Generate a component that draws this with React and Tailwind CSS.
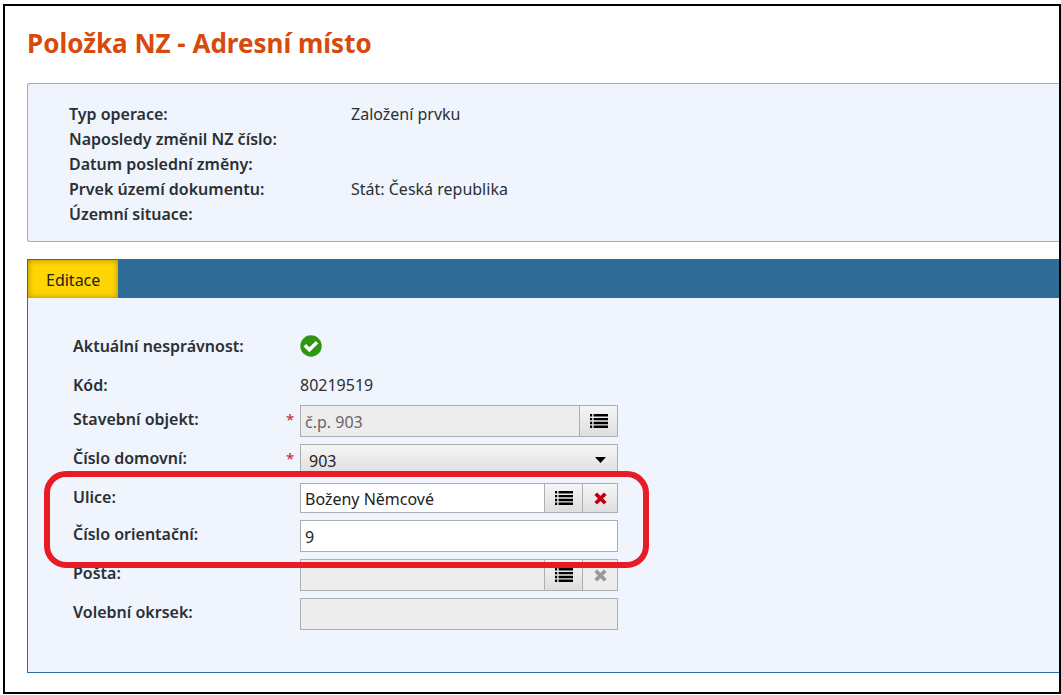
import React from "react";

const fieldBorder = "border border-[#aeaeb2]";
const buttonFace = "bg-linear-to-b from-[#f6f6f6] to-[#dedede]";

const summary = [
  ["Typ operace:", "Založení prvku"],
  ["Naposledy změnil NZ číslo:", ""],
  ["Datum poslední změny:", ""],
  ["Prvek území dokumentu:", "Stát: Česká republika"],
  ["Územní situace:", ""],
];

function ListIcon() {
  return (
    <svg width="18" height="14" viewBox="0 0 18 14" fill="#000" aria-hidden="true">
      <path d="M0 0h2.2v2.4H0zM0 3.9h2.2v2.4H0zM0 7.8h2.2v2.4H0zM0 11.6h2.2V14H0zM3.6 0H18v2.4H3.6zM3.6 3.9H18v2.4H3.6zM3.6 7.8H18v2.4H3.6zM3.6 11.6H18V14H3.6z" />
    </svg>
  );
}

function CrossIcon() {
  return (
    <svg width="13" height="13" viewBox="0 0 12 12" aria-hidden="true">
      <path d="M1.6 1.6l8.8 8.8M10.4 1.6l-8.8 8.8" fill="none" stroke="currentColor" strokeWidth="3.5" />
    </svg>
  );
}

function CheckIcon() {
  return (
    <svg width="22" height="22" viewBox="0 0 22 22" role="img" aria-label="V pořádku">
      <circle cx="11" cy="11" r="10.7" fill="#2f9612" />
      <path d="M4.8 10.2l4.6 4.6 7.6-7.6" fill="none" stroke="#fff" strokeWidth="3.5" />
    </svg>
  );
}

function Row({ label, id, required, children }) {
  return (
    <div className="flex items-start">
      <label htmlFor={id} className="w-[213px] shrink-0 font-semibold leading-7">
        {label}
      </label>
      <span className="w-3.5 shrink-0 text-[15px] leading-7 text-[#c8202c]">{required ? "*" : ""}</span>
      {children}
    </div>
  );
}

function LookupField({ id, value, height, disabled, clear }) {
  return (
    <div className={`flex w-[318px] ${height} ${fieldBorder}`}>
      <input
        id={id}
        type="text"
        defaultValue={value}
        disabled={disabled}
        className="min-w-0 flex-1 bg-white px-1 pt-0.5 text-[#222] outline-none disabled:bg-[#ededed] disabled:text-[#666]"
      />
      <button
        type="button"
        aria-label="Vybrat ze seznamu"
        className={`flex w-[38px] items-center justify-center border-l border-[#aeaeb2] ${buttonFace}`}
      >
        <ListIcon />
      </button>
      {clear && (
        <button
          type="button"
          aria-label="Vymazat"
          disabled={disabled}
          className={`flex w-[35px] items-center justify-center border-l border-[#aeaeb2] text-[#c00010] disabled:text-[#999] ${buttonFace} disabled:from-[#ededed] disabled:to-[#ededed]`}
        >
          <CrossIcon />
        </button>
      )}
    </div>
  );
}

export default function App() {
  return (
    <div className="bg-white pt-1 pl-[3px] pb-0.5 text-base text-[#2b2f33] font-['Noto_Sans','Open_Sans',sans-serif]">
      <main className="border-2 border-black pt-[19px] pb-[19px] pl-[22px]">
        <h1 className="text-[26px] leading-9 font-bold text-[#d64a0c]">Položka NZ - Adresní místo</h1>

        <section className="mt-[22px] rounded-l-[3px] border border-r-0 border-[#a9abb0] bg-[#eff4fd] pt-[18px] pb-[14px] pl-[41px]">
          <dl className="flex flex-col">
            {summary.map(([name, value]) => (
              <div key={name} className="flex min-h-[25px] leading-[25px]">
                <dt className="w-[282px] shrink-0 font-semibold">{name}</dt>
                <dd>{value}</dd>
              </div>
            ))}
          </dl>
        </section>

        <section className="mt-[17px] border border-r-0 border-[#2f6d98] bg-[#eff4fd]">
          <div role="tablist" className="flex bg-[#2f6d98]">
            <button
              type="button"
              role="tab"
              aria-selected="true"
              className="h-[38px] bg-[#ffd503] px-[18px] pt-0.5 text-[#222] shadow-[inset_0_0_6px_rgba(120,90,0,0.6)]"
            >
              Editace
            </button>
          </div>

          <form className="flex flex-col items-start gap-[7px] pt-[29px] pb-[42px] pl-[45px]">
            <div className="flex h-[38px] items-center">
              <span className="w-[227px] font-semibold">Aktuální nesprávnost:</span>
              <CheckIcon />
            </div>
            <div className="flex h-[26px] items-center">
              <span className="w-[227px] font-semibold">Kód:</span>
              <span>80219519</span>
            </div>
            <Row label="Stavební objekt:" id="stavba" required>
              <LookupField id="stavba" value="č.p. 903" height="h-8" disabled />
            </Row>
            <Row label="Číslo domovní:" id="domovni" required>
              <div className="grid w-[318px] items-center">
                <select
                  id="domovni"
                  className={`col-start-1 row-start-1 h-8 appearance-none px-2 pt-0.5 text-[#222] ${fieldBorder} ${buttonFace}`}
                >
                  <option>903</option>
                </select>
                <svg
                  className="pointer-events-none col-start-1 row-start-1 mr-3 justify-self-end"
                  width="11"
                  height="6"
                  viewBox="0 0 11 6"
                  aria-hidden="true"
                >
                  <path d="M0 0h11L5.5 6z" fill="#000" />
                </svg>
              </div>
            </Row>
            <div className="relative flex flex-col gap-[7px]">
              <Row label="Ulice:" id="ulice">
                <LookupField id="ulice" value="Boženy Němcové" height="h-[30px]" clear />
              </Row>
              <Row label="Číslo orientační:" id="orientacni">
                <input
                  id="orientacni"
                  type="text"
                  defaultValue="9"
                  className={`h-8 w-[318px] bg-white px-1 pt-0.5 text-[#222] ${fieldBorder}`}
                />
              </Row>
              <div className="pointer-events-none absolute -top-3 -right-[31px] -bottom-4 -left-[29px] rounded-[22px] border-6 border-[#e81c24]" />
            </div>
            <Row label="Pošta:" id="posta">
              <LookupField id="posta" value="" height="h-8" disabled clear />
            </Row>
            <Row label="Volební okrsek:" id="okrsek">
              <input
                id="okrsek"
                type="text"
                disabled
                className={`h-8 w-[318px] bg-[#ededed] px-1 ${fieldBorder}`}
              />
            </Row>
          </form>
        </section>
      </main>
    </div>
  );
}
